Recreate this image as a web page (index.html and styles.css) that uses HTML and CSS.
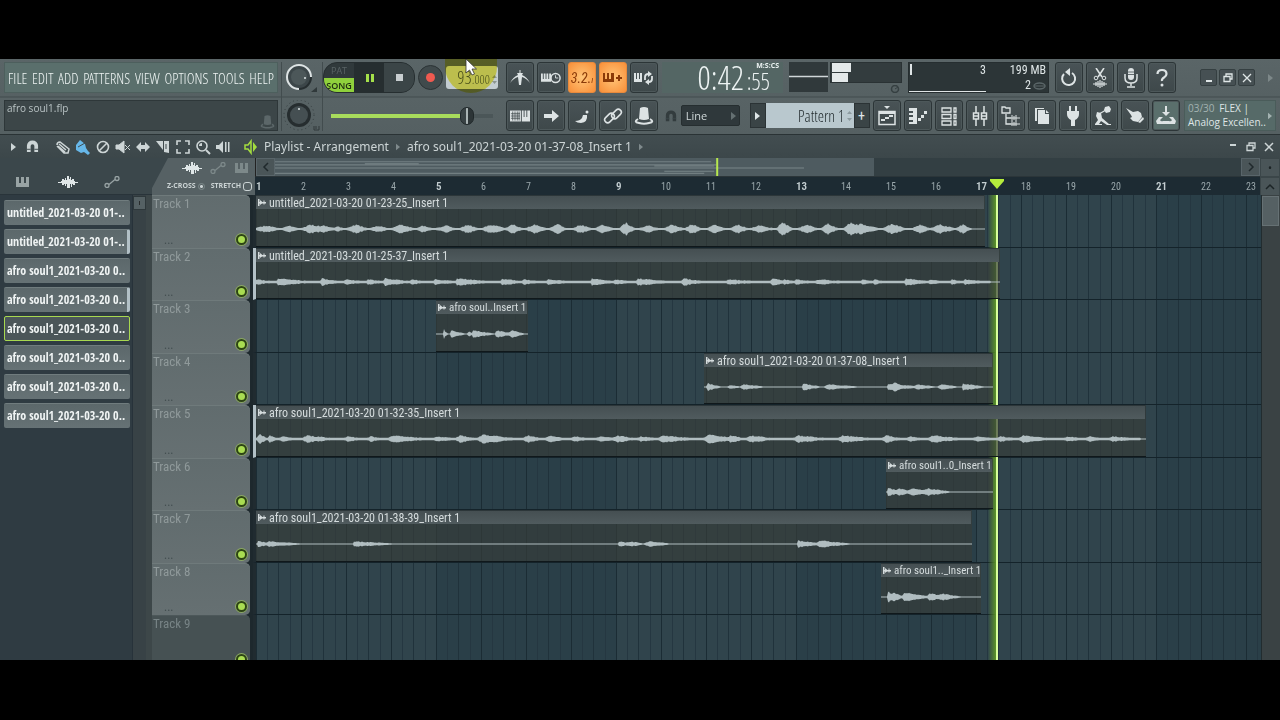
FILE: index.html
```html
<!DOCTYPE html>
<html lang="en">
<head>
<meta charset="utf-8">
<title>FL Studio - afro soul1.flp</title>
<link rel="stylesheet" href="styles.css">
</head>
<body>
<svg class="defs" aria-hidden="true">
  <symbol id="i-piano" viewBox="0 0 16 12"><path d="M1 1h3v6h2V1h1v0h2v6h2V1h3v10H1z"/></symbol>
  <symbol id="i-wave" viewBox="0 0 20 12"><path d="M0 6h3V5h1V3h2v1h1V2h1v2h1V0h2v3h1V1h1v3h1V3h2v2h1v1h3v1h-3v2h-2V8h-1v3h-1V8h-1v4H9V8H8v2H7V8H6v1H4V7H0z"/></symbol>
  <symbol id="i-auto" viewBox="0 0 16 12"><g fill="none" stroke="currentColor" stroke-width="1.3"><circle cx="3" cy="9.500" r="2"/><circle cx="13" cy="2.500" r="2"/><path d="M5 8.500L11 3.500"/></g></symbol>
  <symbol id="i-magnet" viewBox="0 0 14 14"><path d="M1 13V6a6 5.500 0 0 1 12 0v7H9V6.500a2 2 0 0 0-4 0V13z"/><path d="M1 10h4M9 10h4" stroke="#3b4649"/></symbol>
  <symbol id="i-clip" viewBox="0 0 8 7"><path d="M0 0h1.500v7H0zM1.500 3H8v1.500H1.500z"/><path d="M2 1l3 2.500L2 6zM5.500 1.500h1v4h-1z"/></symbol>
  <symbol id="i-hat" viewBox="0 0 20 20"><path d="M6 2q4-2 8 0l1 11q-5 2-10 0z"/><path d="M4 13q-5 3 1 4 5 1.500 10 0 6-1 1-4" fill="none" stroke="currentColor" stroke-width="2"/></symbol>
</svg>

<div class="app">
  <header class="toolbar">
    <div class="col menu-col">
      <nav class="menu">
        <button>FILE</button><button>EDIT</button><button>ADD</button><button>PATTERNS</button><button>VIEW</button><button>OPTIONS</button><button>TOOLS</button><button>HELP</button>
      </nav>
      <div class="hint"><span>afro soul1.flp</span><svg width="15" height="16"><use href="#i-hat"/></svg></div>
    </div>

    <div class="col knobs">
      <svg viewBox="0 0 38 31"><circle cx="17" cy="15" r="12" fill="#3c4649"/><path d="M17 27a12 12 0 1 1 12-12" fill="none" stroke="#dde3e4" stroke-width="2"/><path d="M17 27a12 12 0 0 0 12-12" fill="none" stroke="#262e30" stroke-width="2"/><circle cx="17" cy="15" r="8" fill="#4c5759"/><circle cx="23" cy="16" r="1" fill="#dde3e4"/><path d="M35 25v5h-6z" fill="#30393b"/></svg>
      <svg viewBox="0 0 38 31"><circle cx="17" cy="15" r="15" fill="none" stroke="#343d3f" stroke-dasharray="1 3"/><circle cx="17" cy="15" r="12" fill="#262d2f"/><circle cx="17" cy="15" r="9" fill="#454f52"/><circle cx="17" cy="9" r="1" fill="#dde3e4"/><path d="M32 26v4h5v-4M34 26v3" fill="none" stroke="#30393b"/></svg>
    </div>

    <div class="col transport">
      <div class="row play-row">
        <div class="play-group">
          <div class="mode"><button>PAT</button><button class="on">SONG</button></div>
          <button class="pause" aria-label="Pause"><svg width="9" height="9"><path d="M1 1h3v8H1zM6 1h3v8H6z"/></svg></button>
          <button class="stop" aria-label="Stop"><svg width="7" height="7"><path d="M0 0h7v7H0z"/></svg></button>
        </div>
        <button class="rec" aria-label="Record"><span></span></button>
        <div class="tempo"><b>93</b>.000<svg width="5" height="9"><path d="M0 3L2.500 0 5 3zM0 6l2.500 3L5 6z"/></svg></div>
        <div class="spot"></div>
        <svg class="cursor" viewBox="0 0 12 18"><path d="M1 1v14l3.500-3 2.500 5 2.500-1-2.500-5h4.500z" fill="#fff" stroke="#333" stroke-width=".8"/></svg>
      </div>
      <div class="row"><input class="song-pos" type="range" min="0" max="100" value="87" aria-label="Song position"></div>
    </div>

    <div class="col">
      <div class="row icons">
        <button class="ib" aria-label="Metronome"><svg viewBox="0 0 20 20"><path d="M0 15q3-6 8-8l-1-2h6l-1 2q5 2 8 8-4-5-8-6l-1 8h-2L8 9q-4 1-8 6z"/><path d="M9.500 2h1v4h-1z"/></svg></button>
        <button class="ib" aria-label="Wait for input"><svg viewBox="0 0 22 20"><path d="M0 5h2v6h1V5h2v6h1V5h2v6h1V5h2v9H0z"/><circle cx="16" cy="10" r="5" fill="#454e51" stroke="currentColor" stroke-width="1.600"/><path d="M16 7v3h3" fill="none" stroke="currentColor"/></svg></button>
        <button class="ib lit" aria-label="Countdown"><span class="lcd">3.2.<small>ı</small></span></button>
        <button class="ib lit" aria-label="Overdub"><svg viewBox="0 0 20 20"><path d="M0 5h2v6h2V5h2v6h2V5h3v9H0zM15 7h2v2h2v2h-2v2h-2v-2h-2V9h2z"/></svg></button>
        <button class="ib" aria-label="Loop record"><svg viewBox="0 0 20 20"><path d="M0 5h2v6h1V5h2v6h1V5h2v9H0z"/><path d="M11 12V9q0-3 3.500-3M18 8v3q0 3-3.500 3" fill="none" stroke="currentColor" stroke-width="1.800"/><path d="M14 3l4 3-4 3zM15 17l-4-3 4-3z"/></svg></button>
      </div>
      <div class="row icons">
        <button class="ib" aria-label="Typing keyboard"><svg viewBox="0 0 22 20"><path d="M0 4h12v12H0z"/><path d="M1 7.500h10M1 10h10M1 12.500h10M3 5v10M5.500 5v10M8 5v10M10 5v10" stroke="#3a4345" stroke-width=".8"/><path d="M13 4h2v7h1V4h2v7h1V4h3v12h-9z"/></svg></button>
        <button class="ib" aria-label="Step edit"><svg viewBox="0 0 20 20"><path d="M3 8h8V4l7 6-7 6v-4H3z"/></svg></button>
        <button class="ib" aria-label="Slide notes"><svg viewBox="0 0 20 20"><path d="M3 15q5 0 7-3l1-3h4q1 7-6 8-4 0-6-2z"/><circle cx="15" cy="6" r="1.500"/></svg></button>
        <button class="ib" aria-label="Link"><svg viewBox="0 0 20 20"><g fill="none" stroke="currentColor" stroke-width="1.600"><rect x="1" y="9" width="11" height="6" rx="3" transform="rotate(-45 6.500 12)"/><rect x="8" y="5" width="11" height="6" rx="3" transform="rotate(-45 13.500 8)"/></g></svg></button>
        <button class="ib" aria-label="Tools"><svg viewBox="0 0 20 20"><use href="#i-hat"/></svg></button>
      </div>
    </div>

    <div class="col wide">
      <div class="row upper">
        <div class="clock"><span class="big">0:42</span><span class="cs"><small>M:S:CS</small>:55</span></div>
        <div class="scopes"><svg class="scope" viewBox="0 0 39 30"><path d="M0 14.500h39" stroke="#cfd6d8" stroke-width="1.300"/></svg><div class="levels"><i></i><i class="short"></i></div><svg class="dial" viewBox="0 0 10 8"><circle cx="5" cy="4" r="3.500" fill="none" stroke="#353f41" stroke-width="1.500"/><path d="M5 4l3-2" stroke="#353f41"/></svg></div>
        <div class="perf"><div class="cpu"><span>3</span></div><div class="mem"><span>199 MB</span><span>2 <svg width="13" height="8" viewBox="0 0 13 8"><ellipse cx="6.500" cy="4" rx="5.500" ry="3" fill="none" stroke="#5b6668" stroke-width="1.500"/><path d="M2 4h9" stroke="#5b6668"/></svg></span></div></div>
        <div class="icons">
          <button class="ib" aria-label="Undo"><svg viewBox="0 0 20 20"><path d="M5 6a6.500 6.500 0 1 0 8-1" fill="none" stroke="currentColor" stroke-width="2"/><path d="M11 0v8L6 4z"/></svg></button>
          <button class="ib" aria-label="Edit"><svg viewBox="0 0 20 20"><path d="M6 0l6 9M14 0l-6 9" stroke="currentColor" stroke-width="1.600"/><circle cx="6" cy="10" r="1.800" fill="none" stroke="currentColor"/><circle cx="14" cy="10" r="1.800" fill="none" stroke="currentColor"/><path d="M3 16h14M6 14v4M8 13v6M10 12v8M12 13v6M14 14v4" stroke="currentColor" stroke-width="1.200"/></svg></button>
          <button class="ib" aria-label="Record audio"><svg viewBox="0 0 20 20"><rect x="7" y="0" width="6" height="12" rx="3"/><path d="M4 6v4q0 5 6 5t6-5V6M10 15v3M6 19h8" fill="none" stroke="currentColor" stroke-width="1.500"/><path d="M7 4h6M7 6.500h6" stroke="#454e51" stroke-width=".8"/></svg></button>
          <button class="ib" aria-label="Help"><svg viewBox="0 0 20 20"><path d="M5.500 6q0-4 4.500-4t4.500 4q0 2-2.500 3.500t-2 3.500" fill="none" stroke="currentColor" stroke-width="2.200"/><circle cx="10" cy="17" r="1.500"/></svg></button>
        </div>
        <div class="winctl"><button aria-label="Minimise"><svg viewBox="0 0 10 10"><path d="M2 7h6v2H2z"/></svg></button><button aria-label="Restore"><svg viewBox="0 0 10 10"><path d="M3 3V1h6v5H7M1 3.500h6v5H1z" fill="none" stroke="currentColor" stroke-width="1.300"/></svg></button><button aria-label="Close"><svg viewBox="0 0 10 10"><path d="M1 1l8 8M9 1L1 9" stroke="currentColor" stroke-width="1.300"/></svg></button></div>
        <svg class="more" viewBox="0 0 5 8"><path d="M0 0l5 4-5 4z"/></svg>
      </div>
      <div class="row">
        <svg class="snap-icon" viewBox="0 0 14 14"><use href="#i-magnet"/></svg>
        <div class="snap"><select aria-label="Snap"><option>Line</option></select><svg viewBox="0 0 5 8"><path d="M0 0l5 4-5 4z"/></svg></div>
        <div class="pattern"><button aria-label="Pattern list"><svg width="5" height="8"><path d="M0 0l5 4-5 4z"/></svg></button><input type="text" value="Pattern 1" aria-label="Pattern"><svg class="spin" width="5" height="10"><path d="M0 3L2.500 0 5 3zM0 7l2.500 3L5 7z"/></svg><button aria-label="Add pattern">+</button></div>
        <div class="icons">
          <button class="ib" aria-label="Playlist"><svg viewBox="0 0 20 20"><path d="M7 0h6l-3 3z"/><path d="M2 5.500h16v13H2z" fill="none" stroke="currentColor" stroke-width="1.500"/><path d="M2 7h16M4 14h4M8 12h4M12 10h4" stroke="currentColor" stroke-width="2"/></svg></button>
          <button class="ib" aria-label="Piano roll"><svg viewBox="0 0 20 20"><path d="M1 2h8v16H1v-2h4v-2H1v-3h4V9H1V7h4V5H1zM10 12h3v3h-3zM13 9h3v3h-3zM16 5h3v3h-3z"/></svg></button>
          <button class="ib" aria-label="Channel rack"><svg viewBox="0 0 20 20"><path d="M3 2h9v4H3zM3 8.500h9v4H3zM3 15h9v4H3zM15 2h2v4h-2zM15 8.500h2v4h-2zM15 15h2v4h-2z" fill="none" stroke="currentColor" stroke-width="1.300"/></svg></button>
          <button class="ib" aria-label="Mixer"><svg viewBox="0 0 20 20"><path d="M6 0v7M6 13v7M14 0v7M14 13v7M3.500 7h5v6h-5zM11.500 7h5v6h-5zM4 10h4M12 10h4" fill="none" stroke="currentColor" stroke-width="1.500"/></svg></button>
          <button class="ib" aria-label="Browser"><svg viewBox="0 0 20 20"><path d="M1 1h3l1 1h4v5H1zM5 8v10h5M5 12h5" fill="none" stroke="currentColor" stroke-width="1.300"/><path d="M11 9v6M13 10v4M15 9v6M10 12h9M11 15v6M13 16v4M15 15v6M10 18h9" stroke="currentColor"/></svg></button>
          <button class="ib" aria-label="Project picker"><svg viewBox="0 0 20 20"><path d="M3 2h9v1H5v12H3z"/><path d="M6 4h7v4h4v10H6z"/><path d="M14 4l3 3h-3z"/></svg></button>
          <button class="ib" aria-label="Plugins"><svg viewBox="0 0 20 20"><path d="M6 0h2v5h4V0h2v5h2v3q0 4-4 6v6H8v-6q-4-2-4-6V5h2z"/></svg></button>
          <button class="ib" aria-label="Tempo tapper"><svg viewBox="0 0 20 20"><path d="M11 1l4-1 2 3-1 3-4 1-2-3z"/><path d="M12 4L5 8" stroke="currentColor" stroke-width="1.300"/><path d="M3 6l4 1 1 5 7 6h2v1h-4L7 15l-2 3h3v1H1v-1l3-4-2-4z"/></svg></button>
          <button class="ib" aria-label="Touch"><svg viewBox="0 0 20 20"><path d="M1 2l7 4 5-1 3 2 1 4-4 5-5-1-3-3 2-1-1-2z"/><path d="M18 11l1 2-4 4-2-1z"/></svg></button>
          <button class="ib teal" aria-label="Download"><svg viewBox="0 0 20 20"><path d="M9 0h2v6h3l-4 4-4-4h3z"/><path d="M3 11h4l-3 3q1 2 3 1h6q2 1 3-1l-3-3h4l3 4-1 3H1l-1-3z"/></svg></button>
        </div>
        <div class="news"><p><span>03/30</span> FLEX |</p><p>Analog Excellen..</p><svg viewBox="0 0 5 8"><path d="M0 0l5 4-5 4z"/></svg></div>
      </div>
    </div>
  </header>

  <div class="titlebar">
    <svg class="dim" viewBox="0 0 16 16"><path d="M6 4l5 4-5 4z"/></svg>
    <svg viewBox="0 0 14 14"><use href="#i-magnet"/></svg>
    <div class="tools">
      <svg viewBox="0 0 16 16"><path d="M2 6q0-3 3-3l9 7-1 4-4 0-7-7M4 5l7 6M3 7l7 6" fill="none" stroke="currentColor" stroke-width="1.500"/></svg>
      <svg class="blue" viewBox="0 0 16 16"><path d="M5 1l5 4 1 4 2 3 2 2-2 2-4-3-3 1-5-3V6z"/><path d="M3 8l7-4" stroke="#3f4a4d"/></svg>
      <svg viewBox="0 0 16 16"><circle cx="8" cy="8" r="5.500" fill="none" stroke="currentColor" stroke-width="1.600"/><path d="M4 12l8-8" stroke="currentColor" stroke-width="1.600"/></svg>
      <svg viewBox="0 0 16 16"><path d="M1 6h3l5-4v12l-5-4H1zM10 6l5 5M15 6l-5 5" stroke="currentColor"/></svg>
      <svg viewBox="0 0 16 16"><path d="M1 8l5-5v3h4V3l5 5-5 5v-3H6v3z"/></svg>
      <svg viewBox="0 0 16 16"><path d="M1 2h7v9z"/><path d="M9 2h5v12l-5-1z"/><path d="M11 5v5" stroke="#3f4a4d"/></svg>
      <svg viewBox="0 0 16 16"><path d="M2 6V2h4M10 2h4v4M14 10v4h-4M6 14H2v-4" fill="none" stroke="currentColor" stroke-width="1.600"/></svg>
      <svg viewBox="0 0 16 16"><circle cx="7" cy="7" r="5" fill="none" stroke="currentColor" stroke-width="1.600"/><path d="M11 11l4 4" stroke="currentColor" stroke-width="2"/><path d="M4 7a3 3 0 0 1 3-3v3z"/></svg>
      <svg viewBox="0 0 16 16"><path d="M1 6h3l4-4v12l-4-4H1zM10 3h1.500v10H10zM13 3h1.500v10H13z"/></svg>
    </div>
    <svg class="green" viewBox="0 0 16 16"><path d="M2 6h3l3-4v12l-3-4H2z" fill="none" stroke="currentColor" stroke-width="1.500"/><path d="M10 3l4 5-4 5z"/></svg>
    <h1>Playlist - Arrangement <svg viewBox="0 0 5 8"><path d="M0 0l5 4-5 4z"/></svg> afro soul1_2021-03-20 01-37-08_Insert 1 <svg viewBox="0 0 5 8"><path d="M0 0l5 4-5 4z"/></svg></h1>
    <div class="subctl"><svg viewBox="0 0 10 10"><path d="M2 2h6v2H2z"/></svg><svg viewBox="0 0 10 10"><path d="M3 3V1h6v5H7M1 3.500h6v5H1z" fill="none" stroke="currentColor" stroke-width="1.300"/></svg><svg viewBox="0 0 10 10"><path d="M1 1l8 8M9 1L1 9" stroke="currentColor" stroke-width="1.500"/></svg></div>
  </div>

  <main>
    <aside class="picker">
      <div class="tabs"><svg viewBox="0 0 16 12"><use href="#i-piano"/></svg><svg class="on" viewBox="0 0 20 12"><use href="#i-wave"/></svg><svg viewBox="0 0 16 12"><use href="#i-auto"/></svg></div>
      <div class="picker-body">
        <ul>
          <li>untitled_2021-03-20 01-..</li>
          <li class="grp">untitled_2021-03-20 01-..</li>
          <li>afro soul1_2021-03-20 0..</li>
          <li class="grp">afro soul1_2021-03-20 0..</li>
          <li class="sel">afro soul1_2021-03-20 0..</li>
          <li>afro soul1_2021-03-20 0..</li>
          <li>afro soul1_2021-03-20 0..</li>
          <li>afro soul1_2021-03-20 0..</li>
        </ul>
        <div class="vbar"><span>ı</span></div>
      </div>
    </aside>

    <section class="arr">
      <div class="arr-top">
        <div class="corner">
          <div class="corner-icons"><svg class="on" viewBox="0 0 20 12"><use href="#i-wave"/></svg><svg viewBox="0 0 16 12"><use href="#i-auto"/></svg><svg viewBox="0 0 16 12"><use href="#i-piano"/></svg></div>
          <div class="corner-opts"><label>Z-CROSS <input type="radio"></label><label>STRETCH<input type="checkbox"></label></div>
        </div>
        <div class="nav">
          <div class="hscroll">
            <button aria-label="Scroll left"><svg viewBox="0 0 8 10"><path d="M6 1L2 5l4 4" fill="none" stroke="currentColor" stroke-width="1.500"/></svg></button>
            <div class="overview"><svg viewBox="0 0 600 17" preserveAspectRatio="none"><path d="M0 3.500h437M0 6.500h442M0 14.500h430" stroke="#8b989a" opacity=".6"/><path d="M0 9.500h530" stroke="#8b989a" opacity=".7"/><path d="M90 5.500h54M380 7.500h60M390 12.500h50" stroke="#8b989a" opacity=".7"/><path d="M443 0v17" stroke="#b7e84f" stroke-width="2"/></svg></div>
            <button aria-label="Scroll right"><svg viewBox="0 0 8 10"><path d="M2 1l4 4-4 4" fill="none" stroke="currentColor" stroke-width="1.500"/></svg></button>
          </div>
          <div class="ruler"><b>1</b><span>2</span><span>3</span><span>4</span><b>5</b><span>6</span><span>7</span><span>8</span><b>9</b><span>10</span><span>11</span><span>12</span><b>13</b><span>14</span><span>15</span><span>16</span><b>17</b><span>18</span><span>19</span><span>20</span><b>21</b><span>22</span><span>23</span><svg class="marker" viewBox="0 0 14 10"><path d="M0 0h14v2L7 10 0 2z"/></svg></div>
        </div>
        <div class="zoomcol"><span>•</span><span><svg viewBox="0 0 10 8"><path d="M1 6l4-4 4 4" fill="none" stroke="currentColor" stroke-width="1.500"/></svg></span></div>
      </div>
      <div class="arr-body">
        <div class="tracks">
          <div class="track"><div class="th"><h2>Track 1</h2><i>...</i><button aria-label="Mute track 1"></button></div><div class="lane"><div class="clip" style="width:729px"><p><svg><use href="#i-clip"/></svg>untitled_2021-03-20 01-23-25_Insert 1</p><svg class="wave" data-wave="one"></svg></div></div></div>
          <div class="track grouped"><div class="th"><h2>Track 2</h2><i>...</i><button aria-label="Mute track 2"></button></div><div class="lane"><div class="clip" style="width:744px"><p><svg><use href="#i-clip"/></svg>untitled_2021-03-20 01-25-37_Insert 1</p><svg class="wave" data-wave="two"></svg></div></div></div>
          <div class="track"><div class="th"><h2>Track 3</h2><i>...</i><button aria-label="Mute track 3"></button></div><div class="lane"><div class="clip short-clip" style="margin-left:180px;width:92px"><p><svg><use href="#i-clip"/></svg>afro soul..Insert 1</p><svg class="wave" data-wave="three"></svg></div></div></div>
          <div class="track"><div class="th"><h2>Track 4</h2><i>...</i><button aria-label="Mute track 4"></button></div><div class="lane"><div class="clip" style="margin-left:448px;width:289px"><p><svg><use href="#i-clip"/></svg>afro soul1_2021-03-20 01-37-08_Insert 1</p><svg class="wave" data-wave="four"></svg></div></div></div>
          <div class="track grouped"><div class="th"><h2>Track 5</h2><i>...</i><button aria-label="Mute track 5"></button></div><div class="lane"><div class="clip" style="width:890px"><p><svg><use href="#i-clip"/></svg>afro soul1_2021-03-20 01-32-35_Insert 1</p><svg class="wave" data-wave="five"></svg></div></div></div>
          <div class="track"><div class="th"><h2>Track 6</h2><i>...</i><button aria-label="Mute track 6"></button></div><div class="lane"><div class="clip short-clip" style="margin-left:630px;width:107px"><p><svg><use href="#i-clip"/></svg>afro soul1..0_Insert 1</p><svg class="wave" data-wave="six"></svg></div></div></div>
          <div class="track"><div class="th"><h2>Track 7</h2><i>...</i><button aria-label="Mute track 7"></button></div><div class="lane"><div class="clip" style="width:716px"><p><svg><use href="#i-clip"/></svg>afro soul1_2021-03-20 01-38-39_Insert 1</p><svg class="wave" data-wave="seven"></svg></div></div></div>
          <div class="track"><div class="th"><h2>Track 8</h2><i>...</i><button aria-label="Mute track 8"></button></div><div class="lane"><div class="clip short-clip" style="margin-left:625px;width:100px"><p><svg><use href="#i-clip"/></svg>afro soul1.._Insert 1</p><svg class="wave" data-wave="eight"></svg></div></div></div>
          <div class="track off"><div class="th"><h2>Track 9</h2><i></i><button aria-label="Mute track 9"></button></div><div class="lane"></div></div>
          <div class="playhead"></div>
        </div>
        <div class="vscroll"><span></span></div>
      </div>
    </section>
  </main>
</div>
<script src="waves.js"></script>
</body>
</html>
```
FILE: styles.css
```css
* { box-sizing: border-box; }
body { margin: 0; background: #000; font-family: "Roboto Condensed", "Open Sans Condensed", "Open Sans", sans-serif; font-size: 12px; color: #dfe6e7; }
button, input, select { font: inherit; color: inherit; border: 0; padding: 0; margin: 0; background: none; }
p, h1, h2, ul { margin: 0; padding: 0; font-weight: 400; list-style: none; }
svg { fill: currentColor; display: block; flex: none; }
.defs { display: none; }
.app { height: 100vh; padding: 59px 0 60px; display: flex; flex-direction: column; overflow: hidden; }

/* Toolbar */
.toolbar { display: flex; height: 76px; flex: none; padding: 3px 4px; background: linear-gradient(#5a6567, #566163 37px, #414b4d 38px, #586365 39px, #556062); border-bottom: 1px solid #2a3335; }
.col { display: flex; flex-direction: column; gap: 7px; flex: none; }
.row { display: flex; align-items: center; height: 31px; position: relative; }
.menu-col { width: 274px; }
.menu { height: 31px; background: #5a6f6c; border: 1px solid #4d5f5d; display: flex; align-items: center; padding: 0 3px; justify-content: space-between; font-family: "Open Sans Condensed Light", "Open Sans Condensed", sans-serif; font-size: 15px; line-height: 28px; color: #eef4f3; }
.hint { height: 31px; background: #3c4648; border: 1px solid #2e3739; display: flex; justify-content: space-between; padding: 0 2px; line-height: 15px; font-family: "Open Sans", sans-serif; font-size: 10px; color: #b9c3c4; }
.hint svg { align-self: flex-end; color: #5c6769; }
.knobs { width: 42px; border-left: 1px solid #424c4e; border-right: 1px solid #424c4e; margin-left: 3px; }
.knobs svg { width: 38px; height: 31px; }
.transport { width: 180px; margin-right: 3px; }
.play-group { display: flex; width: 92px; height: 31px; margin-left: 0; border-radius: 14px; background: #30393b; overflow: hidden; border: 1px solid #262e30; }
.mode { width: 30px; font-family: "Open Sans", sans-serif; }
.mode button { display: block; width: 30px; height: 15px; line-height: 15px; text-align: center; color: #596365; font-size: 9px; }
.mode .on { background: #8fd13c; color: #1d2b10; font-weight: 600; border-radius: 0 0 0 10px; }
.play-group .pause { width: 30px; display: grid; place-items: center; background: #262e30; color: #a4e04a; }
.play-group .stop { flex: 1; display: grid; place-items: center; color: #c8ced0; background: #3b4547; }
.rec { width: 25px; height: 25px; margin-left: 3px; border-radius: 50%; background: #404a4c; border: 1px solid #2b3335; display: grid; place-items: center; }
.rec span { width: 9px; height: 9px; border-radius: 50%; background: #f05a50; }
.tempo { margin-left: 3px; width: 52px; height: 23px; border-radius: 3px; background: #c3cdd2; color: #4a5340; display: flex; align-items: baseline; justify-content: flex-end; padding-right: 1px; font-family: "Open Sans Condensed Light", "Open Sans Condensed", sans-serif; font-size: 13px; line-height: 22px; }
.tempo b { font-weight: 400; font-size: 18px; }
.tempo svg { margin-left: 2px; color: #8b9590; }
.spot { position: absolute; left: 122px; top: -3px; width: 52px; height: 34px; border-radius: 0 0 26px 26px; background: #f5ea40; mix-blend-mode: multiply; opacity: .85; }
.cursor { position: absolute; left: 142px; top: -4px; width: 12px; height: 18px; }
.song-pos { appearance: none; width: 162px; height: 20px; margin-left: 8px; background: linear-gradient(90deg, #a8dc5c 132px, #4b5658 132px) center / 100% 4px no-repeat; }
.song-pos::-webkit-slider-thumb { appearance: none; width: 14px; height: 18px; border-radius: 7px; background: linear-gradient(90deg, #394244 5px, #aab4b4 5px, #aab4b4 7px, #2d3537 7px); border: 1px solid #20282a; }
.icons { display: flex; gap: 3px; }
.ib { width: 28px; height: 31px; display: grid; place-items: center; border-radius: 3px; background: linear-gradient(#495356, #3e484a); border: 1px solid #2c3537; box-shadow: inset 0 0 0 1px #4d585a; color: #dde3e4; }
.ib svg { width: 20px; height: 20px; }
.lit { background: radial-gradient(#ffc578, #f98f38); border-color: #e98a3c; box-shadow: none; color: #8a3a08; }
.lcd { font-style: italic; font-size: 14px; }
.lcd small { font-size: 9px; }
.ib.teal { background: #5a6f6c; }
.wide { flex: 1; min-width: 0; margin-left: 4px; }
.wide .row { justify-content: space-between; }
.wide .upper { justify-content: flex-start; gap: 6px; }
.clock { width: 121px; height: 31px; background: #546664; display: flex; justify-content: flex-end; padding-right: 13px; font-family: "Open Sans Condensed Light", "Open Sans Condensed", sans-serif; font-weight: 300; color: #edf3f3; }
.clock .big { font-size: 33px; line-height: 31px; }
.cs { display: flex; flex-direction: column; align-items: flex-end; font-size: 23px; line-height: 23px; margin-left: 3px; }
.cs small { font: 700 7px/8px "Open Sans", sans-serif; margin-right: -9px; }
.scopes { display: grid; grid-template-columns: 39px 72px; column-gap: 2px; height: 31px; position: relative; }
.scope { width: 39px; height: 30px; background: #30393b; }
.levels { height: 21px; background: #333c3e; border: 1px solid #2a3234; padding-left: 1px; }
.levels i { display: block; width: 19px; height: 9px; background: #e4e9ea; margin-bottom: 1px; }
.levels .short { width: 16px; }
.dial { position: absolute; right: 2px; bottom: 0; width: 10px; height: 8px; }
.perf { display: flex; width: 141px; height: 31px; background: #2c3537; border: 1px solid #262e30; font-size: 12px; }
.cpu { flex: 1; border-bottom: 1px solid #dfe5e6; background: linear-gradient(#dfe5e6, #dfe5e6) 1px 1px / 2px 11px no-repeat; text-align: right; line-height: 15px; }
.mem { width: 62px; text-align: right; line-height: 15px; padding-right: 2px; }
.mem span { display: flex; justify-content: flex-end; align-items: center; gap: 2px; }
.winctl { display: flex; gap: 2px; margin-left: 18px; }
.winctl button { width: 17px; height: 17px; display: grid; place-items: center; background: #465053; border: 1px solid #353f41; border-radius: 2px; }
.winctl svg { width: 10px; height: 10px; }
.more { width: 5px; height: 8px; color: #7d8889; margin-left: auto; margin-right: 3px; }
.snap-icon { width: 12px; height: 12px; margin-left: 3px; color: #333c3e; }
.snap { position: relative; width: 59px; }
.snap select { appearance: none; width: 100%; height: 21px; padding-left: 4px; background: #2f383b; border: 1px solid #262e30; font-family: "Open Sans", sans-serif; font-size: 11px; color: #d0d8d9; border-radius: 2px; }
.snap svg { position: absolute; right: 4px; top: 7px; width: 5px; height: 8px; color: #657072; }
.pattern { display: flex; position: relative; height: 25px; margin-left: 6px; }
.pattern button { width: 16px; display: grid; place-items: center; background: #3a4446; border: 1px solid #2b3335; font-size: 14px; }
.pattern input { width: 88px; background: #b9c8ce; color: #1e272a; text-align: right; padding-right: 9px; font-family: "Open Sans Condensed Light", "Open Sans Condensed", sans-serif; font-size: 16px; }
.spin { position: absolute; right: 18px; top: 8px; color: #8c9a9f; }
.news { position: relative; width: 92px; height: 31px; background: #566a68; border: 1px solid #4a5c5a; padding-left: 3px; font-family: "Open Sans", sans-serif; font-size: 10px; line-height: 14px; white-space: nowrap; }
.news span { color: #a3b3b1; margin-right: 2px; }
.news svg { position: absolute; right: 3px; top: 11px; width: 4px; height: 8px; color: #a3b3b1; }

/* Playlist title bar */
.titlebar { flex: none; height: 23px; display: flex; align-items: center; padding: 0 6px 0 5px; background: linear-gradient(#424d50, #3c474a); color: #cdd5d6; }
.titlebar > svg { width: 16px; height: 16px; }
.titlebar > svg + svg { width: 13px; height: 13px; margin-left: 5px; }
.tools { display: flex; gap: 4px; margin: 0 12px 0 16px; }
.tools svg { width: 16px; height: 16px; }
.blue { color: #67b8ea; }
.titlebar > .green { color: #a4dd3f; }
h1 { flex: 1; margin-left: 5px; font-family: "Noto Sans", sans-serif; font-size: 12px; display: flex; align-items: center; gap: 7px; white-space: nowrap; }
h1 svg { width: 4px; height: 8px; color: #7f8a8c; }
.subctl { display: flex; gap: 8px; }
.subctl svg { width: 10px; height: 10px; }

/* Picker */
main { flex: 1; min-height: 0; display: flex; background: #2f3b42; }
.picker { width: 152px; flex: none; display: flex; flex-direction: column; }
.tabs { height: 37px; padding: 12px 32px 0 15px; display: flex; justify-content: space-between; align-items: center; background: #3b474b; border-bottom: 1px solid #29343a; color: #98a3a4; }
.tabs svg { width: 16px; height: 12px; }
.tabs .on, .corner-icons .on { width: 20px; color: #dfe6e7; }
.picker-body { flex: 1; display: flex; border-right: 6px solid #3d4749; }
.picker ul { width: 132px; padding: 5px 2px 0 4px; display: grid; gap: 4px; align-content: start; }
.picker li { height: 25px; border-radius: 2px; background: linear-gradient(#5c686b, #667275); border-top: 1px solid #707c7e; padding: 0 3px; line-height: 23px; font-family: "Open Sans Condensed", "Roboto Condensed", sans-serif; font-size: 12px; color: #f0f4f4; white-space: nowrap; overflow: hidden; }
.picker .grp { border-right: 3px solid #b2c0c6; }
.picker .sel { border: 1px solid #a8d850; background: #4b5659; padding: 0 2px; }
.vbar { flex: 1; background: #384246; border-left: 1px solid #27323a; }
.vbar span { display: block; height: 14px; margin-top: 1px; background: #556164; border: 1px solid #2e383b; font-size: 8px; line-height: 12px; text-align: center; color: #111; }

/* Arrangement */
.arr { flex: 1; min-width: 0; display: flex; flex-direction: column; }
.arr-top { display: flex; height: 37px; background: #3b474b; }
.corner { width: 103px; flex: none; background: #566164; clip-path: polygon(16px 0, 100% 0, 100% 100%, 0 100%, 0 30px); color: #7d898a; }
.corner-icons { height: 19px; display: flex; justify-content: flex-end; align-items: center; gap: 8px; padding-right: 5px; }
.corner-icons svg { width: 16px; height: 12px; }
.corner-opts { display: flex; height: 18px; align-items: center; justify-content: flex-end; gap: 6px; padding-right: 3px; font: 700 7px/18px "Open Sans", sans-serif; color: #cbd3d4; }
.corner-opts label { display: flex; align-items: center; gap: 2px; }
.corner-opts input { appearance: none; width: 9px; height: 9px; border: 1px solid #cbd3d4; border-radius: 3px; }
.corner-opts [type=radio] { width: 7px; height: 7px; border: 1px solid #7d898a; border-radius: 50%; background: radial-gradient(#cbd3d4 1px, transparent 2px); }
.nav { flex: 1; min-width: 0; display: flex; flex-direction: column; }
.hscroll { height: 19px; display: flex; background: #333f43; border-bottom: 1px solid #2b3539; border-left: 1px solid #222; }
.hscroll button { width: 19px; display: grid; place-items: center; background: #4a5558; border: 1px solid #59656a; color: #20292c; }
.hscroll button svg { width: 8px; height: 10px; }
.overview { flex: 1; }
.overview svg { width: 62%; height: 18px; background: #4e5b60; }
.ruler { position: relative; height: 18px; display: flex; background: #1d2b33; padding-left: 1px; overflow: hidden; font-size: 10px; line-height: 20px; color: #9aa7ab; }
.ruler > * { flex: none; width: 45px; }
.ruler b { font-weight: 600; font-size: 11px; color: #c5cfd2; }
.ruler .marker { position: absolute; left: 735px; top: 2px; width: 14px; height: 10px; color: #b5ec3c; }
.zoomcol { width: 20px; color: #1c2426; }
.zoomcol span { height: 19px; display: grid; place-items: center; background: #4a5558; border: 1px solid #3b4649; }
.zoomcol svg { width: 10px; height: 8px; }
.arr-body { flex: 1; min-height: 0; display: flex; }
.tracks { position: relative; flex: 1; min-width: 0; overflow: hidden; background: #1d282d; }
.track { display: flex; height: 53px; }
.track:nth-child(even) { height: 52px; }
.th { width: 98px; flex: none; display: grid; grid-template-columns: 1fr 12px; grid-template-rows: 18px 1fr; padding: 0 2px 2px 1px; margin-right: 2px; background: linear-gradient(#616c6e, #58636a00), #667072; border-top: 1px solid #6f7a7b; border-radius: 0 5px 5px 0; }
.th h2 { grid-column: 1 / 3; font-size: 13px; line-height: 16px; color: #8f999a; }
.th i { font-style: normal; align-self: end; padding-left: 11px; line-height: 12px; color: #434e50; }
.th button { width: 11px; height: 11px; align-self: end; margin-bottom: 1px; border-radius: 50%; background: #a9dc52; border: 2px solid #2d4415; box-shadow: 0 0 0 1px #8ba864; }
.off .th { background: #465153; border-color: #4d585a; }
.off h2 { color: #788486; }
.lane { flex: 1; min-width: 0; border-left: 3px solid #202b30; border-bottom: 1px solid #14232a; margin-left: 1px; background:
  linear-gradient(90deg, #1b2c34 1px, transparent 1px 11px, #253741 11px 12px, transparent 12px 22px, #20323b 22px 23px, transparent 23px 34px, #253741 34px 35px, transparent 35px) 0 0 / 45px 100%,
  linear-gradient(90deg, #30444c 180px, #2a3f48 180px) 0 0 / 360px 100%; }
.grouped .lane { border-left-color: #b2c0c6; }
.clip { position: relative; z-index: 2; height: 100%; background: rgba(54, 61, 58, .68); border-bottom: 1px solid #10181b; }
.clip p { height: 14px; margin-right: 1px; padding-left: 2px; display: flex; align-items: center; gap: 3px; background: linear-gradient(#454f52, #505b5e); white-space: nowrap; overflow: hidden; font-size: 12px; line-height: 14px; color: #d5dcdd; border-top: 1px solid #2c3639; }
.clip p svg { width: 8px; height: 7px; }
.short-clip p { font-size: 11px; }
.wave { width: 100%; height: 38px; fill: #b0bdc0; }
.playhead { position: absolute; left: 836px; top: 0; bottom: 0; width: 10px; background: linear-gradient(90deg, transparent, #5c9428 8px, #d9ff9c 8px); z-index: 1; }
.vscroll { width: 19px; background: #3a4244; border-left: 1px solid #222c2f; }
.vscroll span { display: block; width: 17px; height: 30px; margin-top: 1px; background: #556063; border: 1px solid #667174; }
```
FILE: waves.js
```js
// Each burst is [centre x, amplitude, attack, decay] in clip pixels.
const bursts = {
  one: [[10,4,14,18],[33,4,9,12],[55,5,12,25],[68,4,8,15],[82,3,6,8],[100,5,12,14],[122,4,10,12],[145,5,12,16],[167,4,8,12],[190,4,14,12],[212,5,10,12],[234,5,10,22],[257,5,10,12],[279,5,12,14],[301,6,9,10],[324,5,8,14],[346,5,8,14],[370,7,8,10],[392,4,12,14],[415,5,8,16],[436,6,8,10],[459,5,10,12],[482,5,10,12],[502,4,10,20],[526,8,6,12],[550,5,10,14],[572,6,8,12],[594,7,8,24],[604,6,6,22],[637,6,12,14],[664,5,10,12],[684,5,12,18],[707,5,10,9]],
  two: [[0,3,1,25],[22,4,2,42],[66,4,2,22],[90,3,3,24],[112,3,2,20],[129,4,2,34],[156,3,3,16],[179,3,2,30],[201,4,2,42],[246,4,2,24],[268,3,3,20],[292,3,2,30],[336,4,2,28],[359,3,2,20],[382,4,2,40],[427,4,2,26],[472,3,2,40],[516,4,2,22],[528,3,2,16],[540,3,2,22],[561,3,2,40],[607,3,3,16],[619,3,3,12],[650,4,2,30],[674,3,2,16],[696,3,2,14],[709,3,2,26]],
  three: [[8,5,1,4],[15,4,1,16],[33,3,2,5],[37,4,1,24],[60,4,1,20],[76,4,8,14]],
  four: [[4,4,2,15],[26,2,3,14],[40,3,5,24],[99,4,1,20],[123,3,3,38],[184,4,1,36],[190,5,3,12],[213,3,4,22],[237,3,4,20],[259,4,1,24]],
  five: [[4,5,5,10],[14,4,4,8],[27,3,9,16],[51,4,7,34],[92,3,7,18],[115,3,7,14],[136,4,6,44],[182,3,7,22],[204,4,7,20],[227,5,7,40],[272,4,7,18],[295,4,8,16],[320,3,8,16],[345,3,8,24],[361,4,7,24],[385,3,7,22],[407,4,7,38],[452,5,6,34],[475,4,7,18],[496,4,8,26],[542,4,7,38],[587,4,7,38],[630,4,6,20],[654,3,7,18],[676,4,6,38],[722,3,8,20],[745,3,7,20],[767,4,7,36],[812,3,6,18],[834,3,7,16],[857,3,6,28]],
  six: [[2,4,1,24],[12,4,5,20],[26,4,8,30],[42,4,8,26]],
  seven: [[2,3,1,24],[12,3,3,40],[98,3,1,48],[363,3,1,14],[374,3,8,16],[394,3,8,24],[542,4,1,26],[563,4,4,36]],
  eight: [[7,6,1,14],[12,5,2,12],[23,5,2,30],[49,4,5,18],[59,4,4,24]]
};
// Quietest level of the sustained recordings.
const floors = { one: 1, two: 1.3, five: 1.2 };

document.querySelectorAll('.wave').forEach(svg => {
  const width = svg.parentElement.clientWidth;
  const mid = 20;
  const list = bursts[svg.dataset.wave];
  const last = Math.max(...list.map(([cx, , , decay]) => cx + decay));
  const top = [];
  const bottom = [];
  for (let x = 0; x <= width; x++) {
    let amp = x < last ? floors[svg.dataset.wave] || 0.5 : 0.5;
    for (const [cx, peak, attack, decay] of list) {
      const d = x < cx ? (cx - x) / attack : (x - cx) / decay;
      if (d < 1) amp = Math.max(amp, peak * (1 - d));
    }
    const wobble = amp > 1.5 ? 0.85 + 0.15 * Math.sin(x * 2.3 + Math.sin(x * 0.9) * 3) : 1;
    top.push(`${x},${(mid - amp * wobble).toFixed(1)}`);
    bottom.unshift(`${x},${(mid + amp * wobble).toFixed(1)}`);
  }
  const shape = document.createElementNS('http://www.w3.org/2000/svg', 'polygon');
  shape.setAttribute('points', top.concat(bottom).join(' '));
  svg.append(shape);
});
```
